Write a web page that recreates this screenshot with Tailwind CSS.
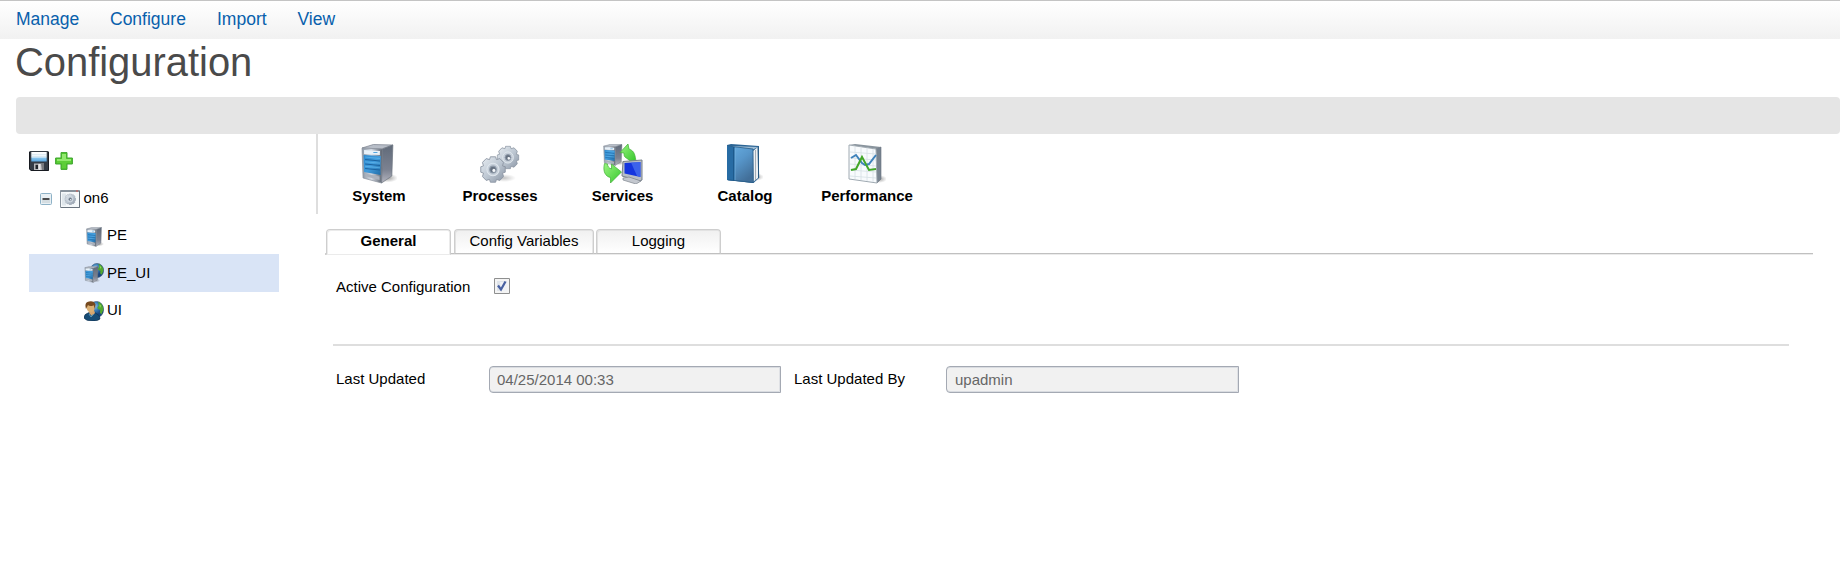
<!DOCTYPE html>
<html lang="en">
<head>
<meta charset="utf-8">
<title>Configuration</title>
<script src="https://cdn.jsdelivr.net/npm/@tailwindcss/browser@4"></script>
</head>
<body class="h-[576px] overflow-hidden bg-white font-['Liberation_Sans',Arial,sans-serif] text-[15px] leading-[18px] text-black">
<svg class="absolute h-0 w-0" aria-hidden="true">
  <defs>
    <linearGradient id="steel"><stop stop-color="#8995a3"/><stop offset=".45" stop-color="#d3d9e2"/><stop offset="1" stop-color="#59616d"/></linearGradient>
    <linearGradient id="side" x2="0" y2="1"><stop stop-color="#606a79"/><stop offset=".65" stop-color="#7c8291"/><stop offset="1" stop-color="#b5b6c0"/></linearGradient>
    <linearGradient id="blue" x2="1" y2="1"><stop stop-color="#2888cf"/><stop offset=".5" stop-color="#409bdc"/><stop offset="1" stop-color="#216da8"/></linearGradient>
    <linearGradient id="gear" x2="1" y2="1"><stop stop-color="#e8edf2"/><stop offset=".5" stop-color="#bec8d3"/><stop offset="1" stop-color="#8a95a4"/></linearGradient>
    <linearGradient id="green" x2="1" y2="1"><stop stop-color="#9af580"/><stop offset="1" stop-color="#35c62b"/></linearGradient>
    <linearGradient id="cover" x2=".6" y2="1"><stop stop-color="#69b0e4"/><stop offset=".5" stop-color="#5796ca"/><stop offset="1" stop-color="#426f99"/></linearGradient>
    <radialGradient id="globe" cx=".4" cy=".3"><stop stop-color="#8fc9e9"/><stop offset=".55" stop-color="#3378b5"/><stop offset="1" stop-color="#1a4680"/></radialGradient>
    <radialGradient id="shade"><stop stop-color="#555" stop-opacity=".6"/><stop offset="1" stop-color="#777" stop-opacity="0"/></radialGradient>
    <symbol id="server" viewBox="0 0 36 40" preserveAspectRatio="none">
      <ellipse cx="26" cy="34" rx="10" ry="4.5" fill="url(#shade)"/>
      <path d="M1 4 12 .5 31 1 20 5z" fill="#b8bec8" stroke="#78808c" stroke-width=".7"/>
      <path d="M1 4 21 5 20 39 2 34z" fill="url(#steel)" stroke="#8a919c" stroke-width=".7"/>
      <path d="M21 5 31 1 30 32 20 39z" fill="url(#side)" stroke="#6c7480" stroke-width=".7"/>
      <path d="M3 6 18.5 7 18.3 11 3 10z" fill="#e7f1f9"/>
      <path d="M12 8.5h4" stroke="#55a6df"/>
      <path d="M2.5 11 19.3 12 19 31 3 28z" fill="url(#blue)"/>
      <path d="M4 15.5 18.5 17M4 20 18.5 21.5M4 24.5 18.5 26" stroke="#1c639f" stroke-width="1"/>
      <path d="M4 13 18.5 14.5M4 17.8 18.5 19.2M4 22.3 18.5 23.8" stroke="#68bbec" stroke-width=".6"/>
      <path d="M4 29.5 18 32.5 18 36 5 32.5z" fill="#aab1bc"/>
    </symbol>
    <symbol id="cog" viewBox="-12 -12 24 24" preserveAspectRatio="none">
      <path d="M-2.4-11.3H2.4L3.2-8.8 6.3-9.7 9.7-6.3 8.8-3.2 11.3-2.4V2.4L8.8 3.2 9.7 6.3 6.3 9.7 3.2 8.8 2.4 11.3H-2.4L-3.2 8.8-6.3 9.7-9.7 6.3-8.8 3.2-11.3 2.4V-2.4L-8.8-3.2-9.7-6.3-6.3-9.7-3.2-8.8z" fill="url(#gear)" stroke="#8b95a2" stroke-width=".8"/>
      <circle r="5.6" fill="#c6cfd9" stroke="#dfe6ed"/>
      <circle r="3" fill="#667180" stroke="#8d99a8"/><circle cx=".8" cy=".8" r="1.4" fill="#f4f7fa"/>
    </symbol>
    <symbol id="world" viewBox="0 0 16 16" preserveAspectRatio="none">
      <circle cx="8" cy="8" r="7.6" fill="url(#globe)" stroke="#34506e" stroke-width=".6"/>
      <path d="M9.5 1C12 1.3 14.6 3.5 15.2 6.5L15 9l-1.8 3.5L11.5 11 12 8.5 9.5 7.5 9 6l1.5-2z" fill="#52a92f"/>
      <path d="m11 3 2 1.5-1.3 2z" fill="#8fd75f"/><path d="M4 12.5 7 12l1 2-2 1z" fill="#5aa53c"/>
    </symbol>
  </defs>
</svg>

<nav class="flex h-[39px] items-start border-t border-[#c4c4c4] bg-linear-to-b from-white to-[#f1f1f1] pt-[8px] pl-4 text-[17.5px] leading-5 text-[#0860ac]">
  <a class="w-[94px]">Manage</a><a class="w-[107px]">Configure</a><a class="w-[80.5px]">Import</a><a>View</a>
</nav>
<h1 class="h-[58px] pl-[15px] text-[39.9px] leading-[46px] text-[#4a4a4a]">Configuration</h1>
<div class="ml-4 h-[37px] rounded-[4px] bg-[#e5e5e5]"></div>

<main class="flex">
  <aside class="w-[316px] shrink-0 pt-[17px] pl-[29px]">
    <div class="flex h-5 items-center gap-1.5">
      <svg class="size-5" viewBox="0 0 20 20">
        <defs><linearGradient id="label" x2="0" y2="1"><stop stop-color="#fff"/><stop offset=".55" stop-color="#e4f2fb"/><stop offset=".62" stop-color="#8ac6ef"/><stop offset="1" stop-color="#58a6df"/></linearGradient></defs>
        <path d="M1 0h18l1 1v18l-1 1H2l-2-2V1z" fill="#343b45"/><path d="M.5 1v16.8L2.2 19.5H19.5V1" fill="none" stroke="#171a20"/>
        <path d="M2.3 1h15.4v9.5H2.3z" fill="url(#label)"/><path d="M3 3.5h14M3 5.5h14" stroke="#c9dce9" stroke-width=".5"/>
        <path d="M5 12.5h10V19H5z" fill="#b7b8bb"/><path d="M12 12.5h3V19h-2z" fill="#77797e"/><path d="M6.5 13.8h2.5v4.2H6.5z" fill="#20242a"/><path d="M9.5 13h2v6h-2z" fill="#e7e7e9"/>
      </svg>
      <svg class="size-[18px]" viewBox="0 0 18 18"><path d="M6 .6h6V6h5.4v6H12v5.4H6V12H.6V6H6z" fill="#52c62d" stroke="#3fa630" stroke-linejoin="round"/><path d="M7 2h4v5h5v2H2V7h5z" fill="#92e96f"/><path d="M7 9h4v7H7zM2 9h14v2H2z" fill="#5dce38"/></svg>
    </div>
    <div class="mt-[9px] flex h-[37px] items-center pl-[11px]">
      <svg class="size-3" viewBox="0 0 12 12"><rect x=".5" y=".5" width="11" height="11" rx="1" fill="#e9f0f4" stroke="#8eb2c7"/><path d="M2 7h8v3H2z" fill="#d5dde1"/><path d="M2.5 6h7" stroke="#161616" stroke-width="1.5"/></svg>
      <svg class="ml-2 h-[18px] w-5" viewBox="0 0 20 18"><path d="M.5.5h19v17H.5z" fill="#f5f8fa" stroke="#89939d"/><path d="M.5.5h19V2H.5z" fill="#89939d"/><path d="M16 1h2" stroke="#d85a50"/><path d="M2 3.5h4v12H2z" fill="#dfe6eb"/><path d="M19.5 1v16.5H1" fill="none" stroke="#69737e"/><use href="#cog" x="4.5" y="3.5" width="11.5" height="11.5"/></svg>
      <span class="ml-[3.5px] -translate-y-px">on6</span>
    </div>
    <div class="flex h-[37px] items-center pl-[57px]">
      <svg class="h-5 w-[18px] translate-y-px" viewBox="0 0 36 40" preserveAspectRatio="none"><use href="#server" width="36" height="40"/></svg>
      <span class="ml-[3px] -translate-y-px">PE</span>
    </div>
    <div class="flex h-[38px] w-[250px] items-center bg-[#d9e4f6] pl-[55px]">
      <svg class="size-5" viewBox="0 0 20 20"><use href="#world" x="6" width="14" height="15"/><use href="#server" x=".3" y="3" width="16" height="17"/></svg>
      <span class="ml-[3px]">PE_UI</span>
    </div>
    <div class="flex h-[37px] items-center pl-[55px]">
      <svg class="size-5" viewBox="0 0 20 20"><use href="#world" x="5" y="0" width="15" height="17"/>
        <path d="M0 17q0-4 4-5l2-1h4l3 2q3 1 3 5-2 2-8 2-6 0-8-3z" fill="#174c76" stroke="#0d2e4c" stroke-width=".6"/><path d="m5 12 3 3 3-3-1-3H6z" fill="#d6a570"/><ellipse cx="6.7" cy="6.5" rx="4" ry="5" fill="#dbb074"/><path d="M2 8Q0 1 5 .5q5-1 6.5 3L11 8 9.6 4.2Q6 6 4 4z" fill="#76491e"/><path d="M5 13 7 16 9.5 13" fill="none" stroke="#5797bc"/></svg>
      <span class="ml-[3px] -translate-y-px">UI</span>
    </div>
  </aside>

  <section class="min-w-0 flex-1">
    <div class="flex h-20 border-l-2 border-[#dedede] pt-2.5 font-bold">
      <div class="flex w-[122px] flex-col items-center"><svg class="h-10 w-9" viewBox="0 0 36 40"><use href="#server" width="37" height="40"/></svg><span class="mt-[3px]">System</span></div>
      <div class="flex w-[120px] flex-col items-center"><svg class="h-10 w-10" viewBox="0 0 40 40"><ellipse cx="24" cy="34" rx="12" ry="4" fill="url(#shade)" opacity=".6"/><use href="#cog" x="16.5" y="1.5" width="23" height="24"/><use href="#cog" x="0" y="12" width="26" height="27"/></svg><span class="mt-[3px]">Processes</span></div>
      <div class="flex w-[125px] flex-col items-center"><svg class="h-10 w-10" viewBox="0 0 40 40">
        <use href="#server" x="0" y="0" width="22" height="22"/>
        <path d="M25 0 17 8.5l4 .5c0 2 0 3 1 4l4 3c1 1 4 2 7 1-1-5-1-10-7-12z" fill="url(#green)" stroke="#3fae33" stroke-width=".7"/>
        <path d="M1.5 19.5c-2 8 1 13 6 14v5.5l11-11L8.5 20v5c-3-1-4-3-4-5z" fill="url(#green)" stroke="#3fae33" stroke-width=".7"/>
        <path d="m20 17.5 19-1.5v20l-2 1-18-5z" fill="#b8bec6" stroke="#78818b"/><path d="M21.5 19 37.5 18v15L21.5 29.5z" fill="#1535de"/><path d="M28 18.6 37.5 18v15L34 32z" fill="#4a72ee" opacity=".75"/><path d="m20 34 6-1 6 2 6 2-5 3-13-4z" fill="#c4c8cf" stroke="#7d848d" stroke-width=".7"/>
      </svg><span class="mt-[3px]">Services</span></div>
      <div class="flex w-[120px] flex-col items-center"><svg class="h-10 w-9" viewBox="0 0 36 40">
        <ellipse cx="28" cy="33" rx="9" ry="4" fill="url(#shade)"/><path d="M0 1 4 0 32 2 32 34 26.5 39 0 36z" fill="#2c6595"/><path d="m26 7 5-4v31l-5 4z" fill="#edf0f3"/><path d="M28.5 6v30" stroke="#a5adb5"/><path d="m31 3 .7 31" stroke="#25567d"/><path d="M5 2 31 3 26 5.5 6 3.5z" fill="#9fbdd5"/><path d="M0 2 26 5 26.5 39 0 36z" fill="url(#cover)"/><path d="M0 2 8 3v34l-8-1z" fill="#286ca4"/><path d="M6.5 3v34" stroke="#1d5a8d"/><path d="M8 3.5v33" stroke="#82b9df" stroke-width=".6"/><path d="M1 2 26 5 26.3 38.5 1 35.8" fill="none" stroke="#245b87" stroke-width=".8"/>
      </svg><span class="mt-[3px]">Catalog</span></div>
      <div class="flex w-[124px] flex-col items-center"><svg class="h-10 w-[38px]" viewBox="0 0 38 40">
        <ellipse cx="31" cy="35" rx="8" ry="4" fill="url(#shade)"/><path d="M1 1 7 0 33 3 28 5z" fill="#89949d"/><path d="m28 5 5-2v32l-4 4z" fill="#788490" stroke="#66717c" stroke-width=".6"/><path d="M1 1 28 5 29 39 1 35z" fill="#f8fbfd" stroke="#a0aab2"/>
        <path d="M2 8 28 10M2 14 28 16M2 20 28 22M2 26 28 28M2 32 28 34M7 3v32M13 4v32M19 4v33M25 5v33" fill="none" stroke="#d5dfe4" stroke-width=".8"/>
        <path d="m3 14 5-3 6 8 3 2 4-1 7-9" fill="none" stroke="#3f83bb" stroke-width="2"/><path d="m3 26 5-1 6-12 7 13 7-1" fill="none" stroke="#43a729" stroke-width="2"/>
      </svg><span class="mt-[3px]">Performance</span></div>
    </div>

    <div class="mt-[15px] ml-[9px] flex h-[26px] w-[1488px]">
      <div class="w-px border-b-2 border-[#cfcfcf]"></div>
      <div class="flex h-[26px] w-[125px] items-start justify-center rounded-t-[4px] border border-[#cecece] border-b-[#ebebeb] pt-[2px] font-bold shadow-[inset_1px_1px_0_#ebebeb,inset_-1px_0_0_#ebebeb]">General</div>
      <div class="flex flex-1 gap-0.5 border-b border-[#ebebeb] pl-[3px] shadow-[inset_0_-1px_0_#c0c0c0]">
        <div class="flex h-[25px] w-[140px] items-start justify-center rounded-t-[4px] border border-[#cecece] border-b-[#c0c0c0] bg-linear-to-b from-[#f0f0f0] to-white pt-[2px] shadow-[inset_1px_1px_0_#e2e2e2,inset_-1px_0_0_#e6e6e6]">Config Variables</div>
        <div class="flex h-[25px] w-[125px] items-start justify-center rounded-t-[4px] border border-[#cecece] border-b-[#c0c0c0] bg-linear-to-b from-[#f0f0f0] to-white pt-[2px] shadow-[inset_1px_1px_0_#e2e2e2,inset_-1px_0_0_#e6e6e6]">Logging</div>
      </div>
    </div>

    <div class="ml-[17px] w-[1456px]">
      <div class="flex h-[91px] items-start border-b-2 border-[#dedede] pt-[23px] pl-[3px]">
        <label class="w-[158px]">Active Configuration</label>
        <svg class="size-4" viewBox="0 0 16 16"><path d="M.5.5h15v15H.5z" fill="#f4f4f4" stroke="#8e8f8f"/><path d="M3 3h10v10H3z" fill="#dfe4ea"/><path d="M6 4h7v9H7z" fill="#f0f2f5"/><path d="m4 7.5 3 4L11.5 3.5" fill="none" stroke="#4860a1" stroke-width="2.2"/></svg>
      </div>
      <div class="flex pt-5 pl-[3px]">
        <label class="w-[153px] pt-[4px]">Last Updated</label>
        <div class="h-[27px] w-[292px] rounded-l-[4px] border border-[#a4a9b3] bg-[#f1f1f1] pt-[4px] pl-[7px] text-[#666] shadow-[inset_0_1px_0_#d9dce1,inset_-1px_0_0_#dfe1e5,inset_0_-1px_0_#d9dce1]">04/25/2014 00:33</div>
        <label class="ml-[13px] w-[152px] pt-[4px]">Last Updated By</label>
        <div class="h-[27px] w-[293px] rounded-l-[4px] border border-[#a4a9b3] bg-[#f1f1f1] pt-[4px] pl-2 text-[#666] shadow-[inset_0_1px_0_#d9dce1,inset_-1px_0_0_#dfe1e5,inset_0_-1px_0_#d9dce1]">upadmin</div>
      </div>
    </div>
  </section>
</main>
</body>
</html>
